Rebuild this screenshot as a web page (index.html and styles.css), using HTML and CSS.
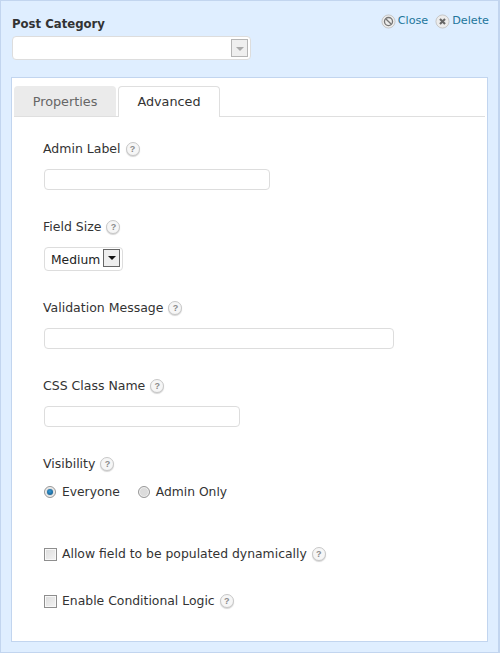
FILE: index.html
```html
<!DOCTYPE html>
<html lang="en">
<head>
    <meta charset="UTF-8">
    <title>Post Category</title>
    <link rel="stylesheet" href="styles.css">
</head>
<body>
    <div class="field-box">
        <div class="head">
            <div class="head-left">
                <div class="title">Post Category</div>
                <div class="fake-select">
                    <span class="fake-arrow"></span>
                </div>
            </div>
            <div class="actions">
                <a class="action">
                    <svg class="action-icon" viewBox="0 0 16 16">
                        <circle cx="8" cy="8" r="7" fill="#ececec" stroke="#c4c4c4"/>
                        <circle cx="8" cy="8" r="4.3" fill="none" stroke="#777" stroke-width="1.4"/>
                        <path d="M5 5l6 6" stroke="#777" stroke-width="1.4"/>
                    </svg>
                    Close
                </a>
                <a class="action">
                    <svg class="action-icon" viewBox="0 0 16 16">
                        <circle cx="8" cy="8" r="7" fill="#ececec" stroke="#c4c4c4"/>
                        <path d="M5.3 5.3l5.4 5.4M10.7 5.3l-5.4 5.4" stroke="#666" stroke-width="2.2"/>
                    </svg>
                    Delete
                </a>
            </div>
        </div>

        <div class="panel">
            <div class="tabs">
                <div class="tab">Properties</div>
                <div class="tab active">Advanced</div>
            </div>
            <div class="tab-body">
                <div class="field">
                    <label>Admin Label <span class="help">?</span></label>
                    <input class="input w-medium" type="text">
                </div>
                <div class="field">
                    <label>Field Size <span class="help">?</span></label>
                    <div class="size-select">
                        <span class="size-value">Medium</span>
                        <span class="size-arrow"></span>
                    </div>
                </div>
                <div class="field">
                    <label>Validation Message <span class="help">?</span></label>
                    <input class="input w-large" type="text">
                </div>
                <div class="field">
                    <label>CSS Class Name <span class="help">?</span></label>
                    <input class="input w-small" type="text">
                </div>
                <div class="field">
                    <label>Visibility <span class="help">?</span></label>
                    <div class="radios">
                        <span class="choice"><span class="radio checked"></span>Everyone</span>
                        <span class="choice"><span class="radio"></span>Admin Only</span>
                    </div>
                </div>
                <div class="check-row first">
                    <span class="check"></span>Allow field to be populated dynamically <span class="help">?</span>
                </div>
                <div class="check-row">
                    <span class="check"></span>Enable Conditional Logic <span class="help">?</span>
                </div>
            </div>
        </div>
    </div>
</body>
</html>
```

FILE: styles.css
```css
html, body {
    margin: 0;
    padding: 0;
}

body {
    font-family: "DejaVu Sans", Verdana, sans-serif;
    font-size: 12px;
    color: #333;
    background: #fff;
}

.field-box {
    box-sizing: border-box;
    width: 500px;
    height: 653px;
    padding: 0 10px 11px 10px;
    background: #dfeeff;
    border: 1px solid #c2d5ef;
    border-right-width: 2px;
}

.head {
    display: flex;
    justify-content: space-between;
    height: 76px;
    padding-left: 1px;
}

.head-left {
    padding-top: 15px;
}

.title {
    font-size: 11.7px;
    font-weight: bold;
    line-height: 16px;
    color: #333;
}

.fake-select {
    box-sizing: border-box;
    width: 239px;
    height: 24px;
    margin-top: 4px;
    background: #fff;
    border: 1px solid #ddd;
    border-radius: 4px;
    display: flex;
    justify-content: flex-end;
    align-items: center;
    padding-right: 2px;
}

.fake-arrow {
    box-sizing: border-box;
    width: 17px;
    height: 18px;
    background: #efefef;
    border: 1px solid #b5b5b5;
    position: relative;
}

.fake-arrow::after {
    content: "";
    position: absolute;
    left: 4px;
    top: 7px;
    border: 4px solid transparent;
    border-top: 4px solid #aaa;
    border-bottom: 0;
}

.actions {
    display: flex;
    gap: 7px;
    padding-top: 12px;
    margin-right: -1px;
    height: 16px;
    font-size: 11.2px;
    line-height: 16px;
}

.action {
    display: flex;
    align-items: center;
    gap: 2px;
    color: #21759b;
}

.action-icon {
    width: 15px;
    height: 15px;
}

.panel {
    box-sizing: border-box;
    height: 565px;
    width: 477px;
    background: #fff;
    border: 1px solid #c2d5ef;
    padding-top: 8px;
}

.tabs {
    display: flex;
    gap: 2px;
    height: 30px;
    margin: 0 2px;
    border-bottom: 1px solid #dfdfdf;
}

.tab {
    box-sizing: border-box;
    width: 102px;
    height: 30px;
    background: #ebebeb;
    color: #666;
    font-size: 12.8px;
    line-height: 32px;
    text-align: center;
    border-radius: 4px 4px 0 0;
}

.tab.active {
    height: 31px;
    background: #fff;
    color: #333;
    border: 1px solid #dfdfdf;
    border-bottom: 0;
    line-height: 30px;
}

.tab-body {
    padding: 24px 0 0 31px;
}

.field {
    margin-bottom: 29px;
}

.field label {
    display: flex;
    align-items: center;
    gap: 5px;
    height: 16px;
    line-height: 16px;
    font-size: 12.5px;
}

.help {
    box-sizing: border-box;
    flex: none;
    width: 14px;
    height: 14px;
    background: #f6f6f6;
    border: 1px solid #c8c8c8;
    border-radius: 50%;
    box-shadow: 0 1px 1px #d4d4d4;
    color: #8a8a8a;
    font-family: "Liberation Sans", Arial, sans-serif;
    font-size: 9px;
    font-weight: bold;
    line-height: 12px;
    text-align: center;
}

.input {
    display: block;
    box-sizing: border-box;
    height: 21px;
    margin: 12px 0 0 1px;
    padding: 0;
    background: #fff;
    border: 1px solid #ddd;
    border-radius: 4px;
}

.w-medium {
    width: 226px;
}

.w-large {
    width: 350px;
}

.w-small {
    width: 196px;
}

.size-select {
    box-sizing: border-box;
    display: flex;
    align-items: flex-start;
    justify-content: space-between;
    width: 79px;
    height: 24px;
    margin: 12px 0 0 1px;
    padding: 1px 2px 0 6px;
    border: 1px solid #ddd;
    border-radius: 4px;
    font-size: 12.3px;
    color: #222;
}

.size-value {
    line-height: 22px;
}

.size-arrow {
    box-sizing: border-box;
    width: 17px;
    height: 18px;
    background: #eee;
    border: 1px solid #666;
    position: relative;
}

.size-arrow::after {
    content: "";
    position: absolute;
    left: 4px;
    top: 6px;
    border: 4px solid transparent;
    border-top: 4px solid #111;
    border-bottom: 0;
}

.radios {
    display: flex;
    gap: 17px;
    margin-top: 12px;
    height: 16px;
    line-height: 16px;
    font-size: 12.3px;
}

.choice {
    display: flex;
    align-items: center;
    gap: 6px;
}

.radio {
    box-sizing: border-box;
    width: 12px;
    height: 12px;
    margin-left: 1px;
    border: 1px solid #999;
    border-radius: 50%;
    background: #dcdcdc;
    box-shadow: inset 0 0 0 1px #f2f2f2;
    position: relative;
}

.radio.checked::after {
    content: "";
    position: absolute;
    left: 2px;
    top: 2px;
    width: 6px;
    height: 6px;
    border-radius: 50%;
    background: radial-gradient(circle at 45% 40%, #3a9ad6, #0b4f7e);
}

.check-row {
    display: flex;
    align-items: center;
    gap: 5px;
    height: 16px;
    line-height: 16px;
    margin-top: 31px;
    font-size: 12.4px;
}

.check-row.first {
    margin-top: 46px;
}

.check {
    box-sizing: border-box;
    width: 13px;
    height: 13px;
    margin-left: 1px;
    border: 1px solid #8e8e8e;
    background: linear-gradient(135deg, #dcdcdc, #f4f4f4);
    box-shadow: inset 0 0 0 1px #f8f8f8;
}
```
